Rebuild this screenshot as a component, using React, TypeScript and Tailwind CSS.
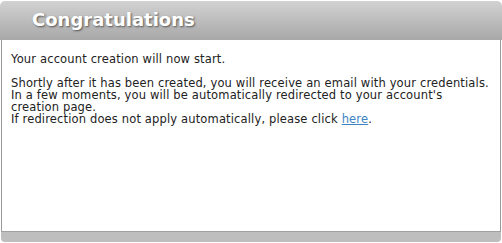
export default function App() {
  return (
    <div className="h-[243px] w-[502px] bg-white pt-px font-['Verdana','DejaVu_Sans',sans-serif] text-[11.5px] leading-[12px] tracking-[0.15px] text-[#222]">
      <div className="flex h-[241px] flex-col">
        <div className="h-[39px] shrink-0 rounded-t-[5px] bg-linear-to-b from-[#d2d2d2] to-[#a8a8a8] pl-[32px] pt-[8px]">
          <h1 className="text-[18px] leading-[22px] font-bold tracking-normal text-white [text-shadow:1px_1px_2px_#555]">
            Congratulations
          </h1>
        </div>
        <div className="mx-px flex-1 border-x border-[#9a9a9a] bg-white pl-[9px] pr-[6px] pt-[13px]">
          <p>Your account creation will now start.</p>
          <p className="mt-[12px]">
            Shortly after it has been created, you will receive an email with your credentials.
            <br />
            In a few moments, you will be automatically redirected to your account&apos;s creation page.
            <br />
            If redirection does not apply automatically, please click{' '}
            <a href="#" className="text-[#3d84c4] underline">
              here
            </a>
            .
          </p>
        </div>
        <div className="mx-px h-[11px] shrink-0 rounded-b-[4px] border-t border-[#a0a0a0] bg-[#bebebe]" />
      </div>
    </div>
  );
}
